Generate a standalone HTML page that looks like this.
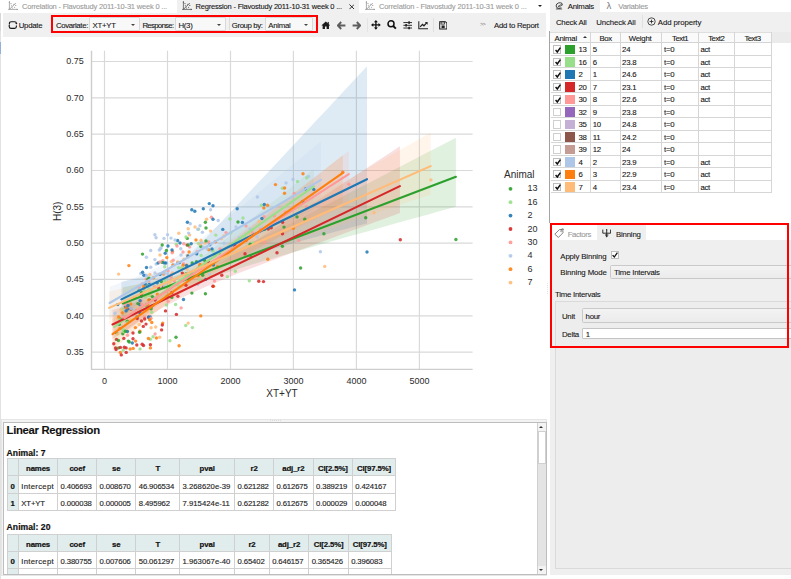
<!DOCTYPE html>
<html><head><meta charset="utf-8"><title>Regression</title>
<style>
*{box-sizing:border-box;margin:0;padding:0}
html,body{width:791px;height:579px;overflow:hidden;background:#fff}
body{position:relative;font-family:"Liberation Sans",sans-serif;font-size:7.8px;letter-spacing:-0.26px;color:#151515;-webkit-text-stroke:0.1px}
.a{position:absolute;white-space:nowrap}
.t{position:absolute;white-space:nowrap;line-height:11px}
.g{color:#9a9a9a}
svg text{font-family:"Liberation Sans",sans-serif;letter-spacing:0;fill:#2b2b2b}
.tk{font-size:9px}.al{font-size:10px}.lg{font-size:9px}
.combo{position:absolute;top:17.3px;height:13.3px;background:#f8f8f8;border:0.7px solid #d9d9d9;border-radius:1px}
.combo span{position:absolute;left:2.4px;top:1.7px;line-height:11px}
.combo i{position:absolute;right:3.6px;top:5.6px;width:0;height:0;border-left:2.3px solid transparent;border-right:2.3px solid transparent;border-top:2.6px solid #444}
.ic{position:absolute}
/* animals table */
.ar{position:absolute;left:550.5px;width:220.4px;height:12.49px;border-bottom:0.9px solid #d6d6d6}
.ar .c{position:absolute;top:1px;line-height:11px}
.cb{position:absolute;left:2.6px;top:2.1px;width:8.2px;height:8.2px;border:0.7px solid #cfcfcf;background:#fff}
.cb.on{border-color:#bdbdbd}
.ckm{position:absolute;left:-0.4px;top:-0.4px;width:8px;height:8px}
.sw{position:absolute;left:14.5px;top:1.5px;width:9.7px;height:9.7px}
.avl{position:absolute;top:31.7px;width:0.9px;height:161.6px;background:#d6d6d6}
/* regression tables */
.rt{position:absolute;background:#fff}
.rt .rh{position:absolute;left:0;top:0;width:100%;background:#e1ecec}
.rt .ri{position:absolute;left:0;top:0;background:#e1ecec}
.rt .vl{position:absolute;top:0;width:0.9px;background:#d0d0d0}
.rt .hl{position:absolute;left:0;width:100%;height:0.9px;background:#d0d0d0}
.rt .th{position:absolute;text-align:center;font-weight:bold;font-size:7.8px;letter-spacing:-0.12px;color:#111;-webkit-text-stroke:0.2px}
.rt .td{position:absolute;font-size:7.7px;letter-spacing:-0.12px;color:#262626;white-space:nowrap;-webkit-text-stroke:0.15px}
</style></head><body>

<!-- ===== top tab bar ===== -->
<div class="a" style="left:0;top:0;width:549px;height:12.5px;background:#fff"></div>
<div class="a" style="left:177px;top:0;width:182.4px;height:12.8px;background:#f0f0f0"></div>
<svg class="ic" style="left:8.2px;top:0.8px" width="10.4" height="9.8" viewBox="0 0 10.4 9.8"><path d="M1.4 0.6V8.4M0.2 8.4H9.6" fill="none" stroke="#909090" stroke-width="0.75"/><path d="M1.4 8.4L7.8 2" fill="none" stroke="#909090" stroke-width="0.8"/><path d="M1.4 0L0.6 1.4H2.2ZM10.2 8.4L8.8 7.6V9.2Z" fill="#909090"/><circle cx="3" cy="2.6" r="0.55" fill="#909090"/><circle cx="3.4" cy="4.8" r="0.55" fill="#909090"/><circle cx="5.8" cy="3.2" r="0.55" fill="#909090"/><circle cx="6.6" cy="6.2" r="0.55" fill="#909090"/><circle cx="7.8" cy="4.4" r="0.55" fill="#909090"/><circle cx="4.6" cy="7" r="0.5" fill="#909090"/></svg>
<span class="t g" style="left:22px;top:0.6px;font-size:7.5px;letter-spacing:-0.19px">Correlation - Flavostudy 2011-10-31 week 0 ...</span>
<svg class="ic" style="left:182.2px;top:0.8px" width="10.4" height="9.8" viewBox="0 0 10.4 9.8"><path d="M1.4 0.6V8.4M0.2 8.4H9.6" fill="none" stroke="#4a4a4a" stroke-width="0.75"/><path d="M1.4 8.4L7.8 2" fill="none" stroke="#4a4a4a" stroke-width="0.8"/><path d="M1.4 0L0.6 1.4H2.2ZM10.2 8.4L8.8 7.6V9.2Z" fill="#4a4a4a"/><circle cx="3" cy="2.6" r="0.55" fill="#4a4a4a"/><circle cx="3.4" cy="4.8" r="0.55" fill="#4a4a4a"/><circle cx="5.8" cy="3.2" r="0.55" fill="#4a4a4a"/><circle cx="6.6" cy="6.2" r="0.55" fill="#4a4a4a"/><circle cx="7.8" cy="4.4" r="0.55" fill="#4a4a4a"/><circle cx="4.6" cy="7" r="0.5" fill="#4a4a4a"/></svg>
<span class="t" style="left:195.5px;top:0.6px;font-size:7.5px;letter-spacing:-0.19px">Regression - Flavostudy 2011-10-31 week 0 ...</span>
<svg class="ic" style="left:348.9px;top:4px" width="5.6" height="5.6" viewBox="0 0 6 6"><path d="M0.5 0.5L5.5 5.5M5.5 0.5L0.5 5.5" stroke="#222" stroke-width="1"/></svg>
<svg class="ic" style="left:365.2px;top:0.8px" width="10.4" height="9.8" viewBox="0 0 10.4 9.8"><path d="M1.4 0.6V8.4M0.2 8.4H9.6" fill="none" stroke="#909090" stroke-width="0.75"/><path d="M1.4 8.4L7.8 2" fill="none" stroke="#909090" stroke-width="0.8"/><path d="M1.4 0L0.6 1.4H2.2ZM10.2 8.4L8.8 7.6V9.2Z" fill="#909090"/><circle cx="3" cy="2.6" r="0.55" fill="#909090"/><circle cx="3.4" cy="4.8" r="0.55" fill="#909090"/><circle cx="5.8" cy="3.2" r="0.55" fill="#909090"/><circle cx="6.6" cy="6.2" r="0.55" fill="#909090"/><circle cx="7.8" cy="4.4" r="0.55" fill="#909090"/><circle cx="4.6" cy="7" r="0.5" fill="#909090"/></svg>
<span class="t g" style="left:379px;top:0.6px;font-size:7.5px;letter-spacing:-0.13px">Correlation - Flavostudy 2011-10-31 week 0 ...</span>
<div class="a" style="left:538px;top:5.2px;width:0;height:0;border-left:2.4px solid transparent;border-right:2.4px solid transparent;border-top:2.8px solid #222"></div>

<!-- ===== toolbar ===== -->
<div class="a" style="left:3px;top:12.6px;width:543px;height:24.1px;background:#f0f0f0"></div>
<div class="a" style="left:0;top:12.5px;width:1.1px;height:566.5px;background:#e2e2e2"></div><div class="a" style="left:0;top:12.5px;width:1.1px;height:18.5px;background:#d6d6d6"></div><div class="a" style="left:0;top:42px;width:1.1px;height:12px;background:#8fb2d6"></div>
<svg class="ic" style="left:8px;top:20.8px" width="9.6" height="8.4" viewBox="0 0 9.6 8.4"><path d="M1.4 3.4V2.6Q1.4 0.8 3.2 0.8H6.6Q8.4 0.8 8.4 2.2M8.4 4.6V5.6Q8.4 7.4 6.6 7.4H3.2Q1.4 7.4 1.4 6" fill="none" stroke="#161616" stroke-width="1.15"/><path d="M0 5L1.9 3.7V6.3ZM7.2 2L8.4 3.6L9.6 2Z" fill="#161616"/></svg>
<span class="t" style="left:18.7px;top:20px">Update</span>
<div class="a" style="left:51px;top:14.8px;width:266.6px;height:18.2px;border:2.4px solid #ff0000;background:#f1f1f1"></div>
<span class="t" style="left:56px;top:20px;letter-spacing:-0.36px">Covariate:</span>
<div class="combo" style="left:89.2px;width:50.8px"><span>XT+YT</span><i></i></div>
<span class="t" style="left:142.4px;top:20px;letter-spacing:-0.7px">Response:</span>
<div class="combo" style="left:175px;width:51px"><span>H(3)</span><i></i></div>
<div class="a" style="left:228.8px;top:17.4px;width:0.7px;height:13px;background:#dcdcdc"></div>
<span class="t" style="left:231.8px;top:20px;letter-spacing:-0.4px">Group by:</span>
<div class="combo" style="left:264.8px;width:47.8px"><span>Animal</span><i></i></div>
<!-- icons -->
<svg class="ic" style="left:320.8px;top:21.2px" width="9.6" height="8.4" viewBox="0 0 10 9"><path d="M5 0.6L0.2 4.8H1.6V8.6H4.1V5.8H5.9V8.6H8.4V4.8H9.8Z" fill="#1c1c1c"/><rect x="7" y="1" width="1.2" height="2.2" fill="#1c1c1c"/></svg>
<svg class="ic" style="left:336.8px;top:20.8px" width="9" height="9" viewBox="0 0 9 9"><path d="M4.2 1L0.9 4.5L4.2 8M1.2 4.5H8.4" fill="none" stroke="#5e5e5e" stroke-width="1.9"/></svg>
<svg class="ic" style="left:352.2px;top:20.8px" width="9" height="9" viewBox="0 0 9 9"><path d="M4.8 1L8.1 4.5L4.8 8M7.8 4.5H0.6" fill="none" stroke="#5e5e5e" stroke-width="1.9"/></svg>
<div class="a" style="left:366.6px;top:18px;width:0.7px;height:14px;background:#e4e4e4"></div>
<svg class="ic" style="left:371.4px;top:20.4px" width="9.8" height="9.8" viewBox="0 0 11 11"><path d="M5.5 1.4V9.6M1.4 5.5H9.6" stroke="#111" stroke-width="1.5"/><path d="M5.5 0L7.7 2.6H3.3ZM5.5 11L7.7 8.4H3.3ZM0 5.5L2.6 3.3V7.7ZM11 5.5L8.4 3.3V7.7Z" fill="#111"/></svg>
<svg class="ic" style="left:387.4px;top:20px" width="10" height="10" viewBox="0 0 10 10"><circle cx="4" cy="3.8" r="3" fill="none" stroke="#111" stroke-width="1.5"/><path d="M6.2 6L8.9 8.7" stroke="#111" stroke-width="1.9"/></svg>
<svg class="ic" style="left:402.8px;top:21px" width="9.4" height="8.6" viewBox="0 0 10 9"><path d="M0.4 1.6H9.6M0.4 4.5H9.6M0.4 7.4H9.6" stroke="#222" stroke-width="1"/><rect x="5.6" y="0.3" width="1.8" height="2.6" fill="#222"/><rect x="2.4" y="3.2" width="1.8" height="2.6" fill="#222"/><rect x="5.6" y="6.1" width="1.8" height="2.6" fill="#222"/></svg>
<svg class="ic" style="left:417.6px;top:21px" width="10.6" height="8.6" viewBox="0 0 11 9"><path d="M0.8 0.2V8.2H10.8" fill="none" stroke="#222" stroke-width="1.1"/><path d="M2.2 6.2L4.6 3.6L6.2 5L9 2" fill="none" stroke="#222" stroke-width="1.3"/><path d="M7.2 1H10V3.8Z" fill="#222"/></svg>
<div class="a" style="left:433px;top:18px;width:0.7px;height:14px;background:#e0e0e0"></div>
<svg class="ic" style="left:438.6px;top:21px" width="8.6" height="8.6" viewBox="0 0 10 10"><path d="M0.8 0.8H7.4L9.2 2.6V9.2H0.8Z" fill="none" stroke="#222" stroke-width="1.2"/><rect x="2.4" y="1" width="4" height="2.6" fill="none" stroke="#222" stroke-width="0.9"/><rect x="3" y="5.2" width="3.6" height="3" fill="#222"/></svg>
<span class="t" style="left:480px;top:19.4px;color:#777;font-size:5.6px;letter-spacing:-0.7px;-webkit-text-stroke:0">&gt;&gt;</span>
<span class="t" style="left:494px;top:20px">Add to Report</span>

<!-- ===== plot ===== -->
<svg id="plot" width="549" height="385" viewBox="0 36 549 385" style="position:absolute;left:0;top:36px"><line x1="104.5" y1="50.7" x2="104.5" y2="369.4" stroke="#d9d9d9" stroke-width="1.15"/><line x1="167.5" y1="50.7" x2="167.5" y2="369.4" stroke="#d9d9d9" stroke-width="1.15"/><line x1="230.5" y1="50.7" x2="230.5" y2="369.4" stroke="#d9d9d9" stroke-width="1.15"/><line x1="293.4" y1="50.7" x2="293.4" y2="369.4" stroke="#d9d9d9" stroke-width="1.15"/><line x1="356.4" y1="50.7" x2="356.4" y2="369.4" stroke="#d9d9d9" stroke-width="1.15"/><line x1="419.4" y1="50.7" x2="419.4" y2="369.4" stroke="#d9d9d9" stroke-width="1.15"/><line x1="91.5" y1="352.1" x2="472.6" y2="352.1" stroke="#d9d9d9" stroke-width="1.15"/><line x1="91.5" y1="315.8" x2="472.6" y2="315.8" stroke="#d9d9d9" stroke-width="1.15"/><line x1="91.5" y1="279.4" x2="472.6" y2="279.4" stroke="#d9d9d9" stroke-width="1.15"/><line x1="91.5" y1="243.1" x2="472.6" y2="243.1" stroke="#d9d9d9" stroke-width="1.15"/><line x1="91.5" y1="206.8" x2="472.6" y2="206.8" stroke="#d9d9d9" stroke-width="1.15"/><line x1="91.5" y1="170.5" x2="472.6" y2="170.5" stroke="#d9d9d9" stroke-width="1.15"/><line x1="91.5" y1="134.1" x2="472.6" y2="134.1" stroke="#d9d9d9" stroke-width="1.15"/><line x1="91.5" y1="97.8" x2="472.6" y2="97.8" stroke="#d9d9d9" stroke-width="1.15"/><line x1="91.5" y1="61.5" x2="472.6" y2="61.5" stroke="#d9d9d9" stroke-width="1.15"/><polygon fill="#2ca02c" fill-opacity="0.15" points="122.8,287.2 136.6,284.7 150.5,282.0 164.4,278.8 178.3,274.9 192.2,269.8 206.1,264.0 219.9,257.8 233.8,251.3 247.7,244.6 261.6,237.8 275.5,230.8 289.3,223.8 303.2,216.7 317.1,209.6 331.0,202.4 344.9,195.3 358.8,188.1 372.6,180.9 386.5,173.7 400.4,166.5 414.3,159.3 428.2,152.1 442.0,144.9 455.9,137.7 455.9,206.8 442.0,210.6 428.2,214.5 414.3,218.3 400.4,222.1 386.5,226.0 372.6,229.9 358.8,233.7 344.9,237.6 331.0,241.5 317.1,245.5 303.2,249.4 289.3,253.4 275.5,257.5 261.6,261.6 247.7,265.8 233.8,270.2 219.9,274.7 206.1,279.4 192.2,284.4 178.3,289.9 164.4,296.5 150.5,303.9 136.6,311.7 122.8,319.7"/><polygon fill="#98df8a" fill-opacity="0.15" points="114.1,312.0 122.4,307.7 130.7,303.3 139.0,298.9 147.4,294.3 155.7,289.4 164.0,284.3 172.3,278.7 180.7,272.8 189.0,266.8 197.3,260.7 205.6,254.4 214.0,248.1 222.3,241.7 230.6,235.2 238.9,228.7 247.3,222.2 255.6,215.6 263.9,209.0 272.2,202.3 280.6,195.7 288.9,189.0 297.2,182.3 305.5,175.6 313.8,168.9 313.8,209.4 305.5,214.0 297.2,218.7 288.9,223.3 280.6,228.0 272.2,232.7 263.9,237.4 255.6,242.1 247.3,246.8 238.9,251.6 230.6,256.4 222.3,261.3 214.0,266.3 205.6,271.3 197.3,276.5 189.0,281.9 180.7,287.5 172.3,293.2 164.0,299.4 155.7,306.0 147.4,312.8 139.0,319.9 130.7,327.2 122.4,334.5 114.1,341.9"/><polygon fill="#1f77b4" fill-opacity="0.15" points="121.4,281.9 131.6,279.6 141.8,277.2 152.1,274.6 162.3,271.3 172.5,267.1 182.8,260.4 193.0,251.0 203.3,240.7 213.5,230.1 223.7,219.3 234.0,208.5 244.2,197.6 254.4,186.7 264.7,175.8 274.9,164.9 285.1,153.9 295.4,143.0 305.6,132.1 315.8,121.1 326.1,110.2 336.3,99.2 346.5,88.2 356.8,77.3 367.0,66.3 367.0,223.4 356.8,226.1 346.5,228.8 336.3,231.6 326.1,234.3 315.8,237.1 305.6,239.8 295.4,242.6 285.1,245.4 274.9,248.2 264.7,251.0 254.4,253.9 244.2,256.8 234.0,259.7 223.7,262.7 213.5,265.9 203.3,269.2 193.0,272.8 182.8,276.9 172.5,281.6 162.3,287.4 152.1,294.2 141.8,301.6 131.6,309.2 121.4,317.0"/><polygon fill="#d62728" fill-opacity="0.15" points="112.5,309.9 124.5,306.1 136.4,302.3 148.4,298.2 160.4,293.9 172.4,288.9 184.3,283.3 196.3,277.0 208.3,270.1 220.3,262.9 232.2,255.4 244.2,247.9 256.2,240.2 268.2,232.5 280.1,224.7 292.1,216.9 304.1,209.1 316.1,201.3 328.0,193.5 340.0,185.6 352.0,177.8 364.0,169.9 375.9,162.0 387.9,154.2 399.9,146.3 399.9,213.0 387.9,217.4 375.9,221.8 364.0,226.2 352.0,230.6 340.0,235.0 328.0,239.5 316.1,243.9 304.1,248.4 292.1,252.8 280.1,257.3 268.2,261.9 256.2,266.5 244.2,271.1 232.2,275.8 220.3,280.7 208.3,285.7 196.3,290.9 184.3,296.4 172.4,302.4 160.4,309.0 148.4,316.1 136.4,323.6 124.5,331.3 112.5,339.1"/><polygon fill="#ff9896" fill-opacity="0.15" points="124.4,302.0 133.8,298.4 143.1,294.6 152.5,290.6 161.8,286.1 171.2,280.9 180.5,274.9 189.9,268.7 199.2,262.3 208.6,255.7 217.9,249.1 227.3,242.3 236.6,235.5 246.0,228.6 255.3,221.7 264.7,214.7 274.0,207.7 283.4,200.7 292.7,193.6 302.0,186.6 311.4,179.5 320.7,172.4 330.1,165.3 339.4,158.2 348.8,151.1 348.8,204.0 339.4,208.5 330.1,213.1 320.7,217.6 311.4,222.1 302.0,226.6 292.7,231.2 283.4,235.7 274.0,240.3 264.7,244.9 255.3,249.5 246.0,254.2 236.6,258.9 227.3,263.6 217.9,268.5 208.6,273.5 199.2,278.6 189.9,283.9 180.5,289.6 171.2,295.5 161.8,302.3 152.5,309.8 143.1,317.8 133.8,326.1 124.4,334.5"/><polygon fill="#aec7e8" fill-opacity="0.15" points="109.6,286.7 118.4,283.6 127.2,280.3 136.0,276.9 144.8,273.2 153.6,269.3 162.5,264.8 171.3,259.8 180.1,254.1 188.9,247.9 197.7,241.3 206.5,234.5 215.3,227.6 224.1,220.6 232.9,213.5 241.7,206.4 250.6,199.2 259.4,192.0 268.2,184.8 277.0,177.6 285.8,170.4 294.6,163.2 303.4,155.9 312.2,148.7 321.0,141.4 321.0,209.9 312.2,213.4 303.4,216.9 294.6,220.4 285.8,224.0 277.0,227.5 268.2,231.1 259.4,234.6 250.6,238.2 241.7,241.9 232.9,245.5 224.1,249.3 215.3,253.0 206.5,256.9 197.7,260.9 188.9,265.1 180.1,269.6 171.3,274.4 162.5,279.6 153.6,285.4 144.8,291.7 136.0,298.3 127.2,305.2 118.4,312.2 109.6,319.2"/><polygon fill="#ff7f0e" fill-opacity="0.15" points="112.5,318.0 122.1,313.3 131.7,308.4 141.3,303.5 150.9,298.3 160.5,292.7 170.1,286.6 179.7,279.9 189.3,273.0 198.9,266.1 208.5,259.0 218.1,251.9 227.7,244.7 237.3,237.4 246.9,230.1 256.4,222.7 266.0,215.3 275.6,207.9 285.2,200.4 294.8,192.9 304.4,185.4 314.0,177.9 323.6,170.4 333.2,162.8 342.8,155.3 342.8,202.8 333.2,207.9 323.6,213.1 314.0,218.2 304.4,223.4 294.8,228.5 285.2,233.7 275.6,238.9 266.0,244.1 256.4,249.3 246.9,254.6 237.3,259.9 227.7,265.3 218.1,270.8 208.5,276.4 198.9,282.2 189.3,288.2 179.7,294.5 170.1,301.2 160.5,308.5 150.9,316.4 141.3,324.6 131.7,333.1 122.1,341.7 112.5,350.5"/><polygon fill="#ffbb78" fill-opacity="0.15" points="109.1,291.7 122.5,288.2 135.9,284.5 149.3,280.6 162.7,276.2 176.1,271.1 189.5,265.1 202.9,258.7 216.3,252.0 229.7,245.0 243.1,237.9 256.5,230.6 269.9,223.2 283.3,215.8 296.7,208.3 310.1,200.8 323.5,193.3 336.9,185.7 350.3,178.2 363.7,170.6 377.1,163.0 390.5,155.4 403.9,147.8 417.3,140.2 430.7,132.6 430.7,194.6 417.3,199.1 403.9,203.6 390.5,208.1 377.1,212.6 363.7,217.1 350.3,221.7 336.9,226.2 323.5,230.8 310.1,235.3 296.7,239.9 283.3,244.6 269.9,249.3 256.5,254.0 243.1,258.9 229.7,263.8 216.3,268.9 202.9,274.2 189.5,279.8 176.1,285.7 162.7,292.4 149.3,299.8 135.9,307.7 122.5,315.9 109.1,324.2"/><circle cx="176.0" cy="337.3" r="1.7" fill="#2ca02c" fill-opacity="0.85"/><circle cx="141.5" cy="321.0" r="1.7" fill="#d62728" fill-opacity="0.85"/><circle cx="252.6" cy="232.8" r="1.7" fill="#ff9896" fill-opacity="0.85"/><circle cx="187.3" cy="255.5" r="1.7" fill="#ffbb78" fill-opacity="0.85"/><circle cx="158.7" cy="288.1" r="1.7" fill="#d62728" fill-opacity="0.85"/><circle cx="156.4" cy="338.0" r="1.7" fill="#ff7f0e" fill-opacity="0.85"/><circle cx="153.5" cy="277.7" r="1.7" fill="#ff7f0e" fill-opacity="0.85"/><circle cx="284.0" cy="227.1" r="1.7" fill="#2ca02c" fill-opacity="0.85"/><circle cx="155.0" cy="272.9" r="1.7" fill="#aec7e8" fill-opacity="0.85"/><circle cx="171.2" cy="277.6" r="1.7" fill="#ff9896" fill-opacity="0.85"/><circle cx="282.6" cy="222.2" r="1.7" fill="#d62728" fill-opacity="0.85"/><circle cx="198.5" cy="243.5" r="1.7" fill="#98df8a" fill-opacity="0.85"/><circle cx="188.1" cy="278.7" r="1.7" fill="#d62728" fill-opacity="0.85"/><circle cx="144.4" cy="317.1" r="1.7" fill="#ff9896" fill-opacity="0.85"/><circle cx="264.7" cy="229.2" r="1.7" fill="#2ca02c" fill-opacity="0.85"/><circle cx="263.5" cy="281.6" r="1.7" fill="#d62728" fill-opacity="0.85"/><circle cx="268.3" cy="229.1" r="1.7" fill="#d62728" fill-opacity="0.85"/><circle cx="187.1" cy="269.3" r="1.7" fill="#ffbb78" fill-opacity="0.85"/><circle cx="188.3" cy="275.9" r="1.7" fill="#2ca02c" fill-opacity="0.85"/><circle cx="131.0" cy="309.0" r="1.7" fill="#d62728" fill-opacity="0.85"/><circle cx="125.0" cy="326.0" r="1.7" fill="#ffbb78" fill-opacity="0.85"/><circle cx="183.8" cy="243.7" r="1.7" fill="#ff9896" fill-opacity="0.85"/><circle cx="162.8" cy="260.6" r="1.7" fill="#ff9896" fill-opacity="0.85"/><circle cx="143.4" cy="292.5" r="1.7" fill="#ffbb78" fill-opacity="0.85"/><circle cx="141.1" cy="296.4" r="1.7" fill="#1f77b4" fill-opacity="0.85"/><circle cx="250.3" cy="234.4" r="1.7" fill="#ffbb78" fill-opacity="0.85"/><circle cx="133.0" cy="333.0" r="1.7" fill="#d62728" fill-opacity="0.85"/><circle cx="197.7" cy="284.2" r="1.7" fill="#aec7e8" fill-opacity="0.85"/><circle cx="176.4" cy="314.4" r="1.7" fill="#d62728" fill-opacity="0.85"/><circle cx="130.1" cy="319.5" r="1.7" fill="#ffbb78" fill-opacity="0.85"/><circle cx="151.1" cy="327.8" r="1.7" fill="#ffbb78" fill-opacity="0.85"/><circle cx="165.2" cy="253.3" r="1.7" fill="#1f77b4" fill-opacity="0.85"/><circle cx="230.9" cy="232.8" r="1.7" fill="#98df8a" fill-opacity="0.85"/><circle cx="282.5" cy="233.7" r="1.7" fill="#d62728" fill-opacity="0.85"/><circle cx="157.2" cy="282.8" r="1.7" fill="#1f77b4" fill-opacity="0.85"/><circle cx="131.2" cy="308.6" r="1.7" fill="#aec7e8" fill-opacity="0.85"/><circle cx="183.5" cy="299.5" r="1.7" fill="#1f77b4" fill-opacity="0.85"/><circle cx="132.3" cy="343.0" r="1.7" fill="#1f77b4" fill-opacity="0.85"/><circle cx="139.9" cy="331.2" r="1.7" fill="#ff7f0e" fill-opacity="0.85"/><circle cx="123.2" cy="350.2" r="1.7" fill="#98df8a" fill-opacity="0.85"/><circle cx="141.2" cy="300.9" r="1.7" fill="#ff9896" fill-opacity="0.85"/><circle cx="135.5" cy="312.0" r="1.7" fill="#ff7f0e" fill-opacity="0.85"/><circle cx="213.5" cy="286.3" r="1.7" fill="#ff7f0e" fill-opacity="0.85"/><circle cx="209.8" cy="244.7" r="1.7" fill="#1f77b4" fill-opacity="0.85"/><circle cx="140.0" cy="348.9" r="1.7" fill="#98df8a" fill-opacity="0.85"/><circle cx="116.5" cy="332.8" r="1.7" fill="#2ca02c" fill-opacity="0.85"/><circle cx="227.4" cy="276.7" r="1.7" fill="#98df8a" fill-opacity="0.85"/><circle cx="150.4" cy="344.8" r="1.7" fill="#d62728" fill-opacity="0.85"/><circle cx="168.0" cy="270.8" r="1.7" fill="#ff9896" fill-opacity="0.85"/><circle cx="205.4" cy="222.3" r="1.7" fill="#2ca02c" fill-opacity="0.85"/><circle cx="285.3" cy="212.1" r="1.7" fill="#ff9896" fill-opacity="0.85"/><circle cx="400.3" cy="239.8" r="1.7" fill="#d62728" fill-opacity="0.85"/><circle cx="304.8" cy="219.2" r="1.7" fill="#2ca02c" fill-opacity="0.85"/><circle cx="148.7" cy="317.2" r="1.7" fill="#d62728" fill-opacity="0.85"/><circle cx="235.3" cy="271.2" r="1.7" fill="#98df8a" fill-opacity="0.85"/><circle cx="162.2" cy="262.4" r="1.7" fill="#2ca02c" fill-opacity="0.85"/><circle cx="208.7" cy="242.0" r="1.7" fill="#ff9896" fill-opacity="0.85"/><circle cx="284.5" cy="193.3" r="1.7" fill="#ff7f0e" fill-opacity="0.85"/><circle cx="189.6" cy="246.9" r="1.7" fill="#ff9896" fill-opacity="0.85"/><circle cx="169.9" cy="340.7" r="1.7" fill="#98df8a" fill-opacity="0.85"/><circle cx="127.3" cy="321.2" r="1.7" fill="#2ca02c" fill-opacity="0.85"/><circle cx="374.0" cy="212.8" r="1.7" fill="#ffbb78" fill-opacity="0.85"/><circle cx="294.2" cy="193.4" r="1.7" fill="#ff9896" fill-opacity="0.85"/><circle cx="139.9" cy="313.1" r="1.7" fill="#1f77b4" fill-opacity="0.85"/><circle cx="190.3" cy="223.7" r="1.7" fill="#aec7e8" fill-opacity="0.85"/><circle cx="147.8" cy="286.0" r="1.7" fill="#2ca02c" fill-opacity="0.85"/><circle cx="252.6" cy="242.9" r="1.7" fill="#98df8a" fill-opacity="0.85"/><circle cx="342.8" cy="172.3" r="1.7" fill="#ff7f0e" fill-opacity="0.85"/><circle cx="205.1" cy="243.1" r="1.7" fill="#ffbb78" fill-opacity="0.85"/><circle cx="215.2" cy="254.7" r="1.7" fill="#d62728" fill-opacity="0.85"/><circle cx="140.1" cy="300.7" r="1.7" fill="#1f77b4" fill-opacity="0.85"/><circle cx="300.6" cy="268.0" r="1.7" fill="#2ca02c" fill-opacity="0.85"/><circle cx="198.5" cy="229.2" r="1.7" fill="#98df8a" fill-opacity="0.85"/><circle cx="200.9" cy="246.5" r="1.7" fill="#2ca02c" fill-opacity="0.85"/><circle cx="135.9" cy="297.4" r="1.7" fill="#98df8a" fill-opacity="0.85"/><circle cx="211.2" cy="250.2" r="1.7" fill="#aec7e8" fill-opacity="0.85"/><circle cx="365.7" cy="217.7" r="1.7" fill="#2ca02c" fill-opacity="0.85"/><circle cx="226.0" cy="232.6" r="1.7" fill="#ff9896" fill-opacity="0.85"/><circle cx="171.8" cy="297.4" r="1.7" fill="#2ca02c" fill-opacity="0.85"/><circle cx="217.5" cy="266.8" r="1.7" fill="#ff7f0e" fill-opacity="0.85"/><circle cx="183.5" cy="263.6" r="1.7" fill="#ff9896" fill-opacity="0.85"/><circle cx="142.2" cy="284.0" r="1.7" fill="#ff9896" fill-opacity="0.85"/><circle cx="127.5" cy="335.2" r="1.7" fill="#ff9896" fill-opacity="0.85"/><circle cx="122.8" cy="333.7" r="1.7" fill="#2ca02c" fill-opacity="0.85"/><circle cx="267.5" cy="205.3" r="1.7" fill="#ff7f0e" fill-opacity="0.85"/><circle cx="196.0" cy="275.1" r="1.7" fill="#ffbb78" fill-opacity="0.85"/><circle cx="149.7" cy="301.6" r="1.7" fill="#ff9896" fill-opacity="0.85"/><circle cx="250.2" cy="244.2" r="1.7" fill="#2ca02c" fill-opacity="0.85"/><circle cx="150.4" cy="295.4" r="1.7" fill="#ffbb78" fill-opacity="0.85"/><circle cx="153.1" cy="336.7" r="1.7" fill="#98df8a" fill-opacity="0.85"/><circle cx="141.5" cy="293.2" r="1.7" fill="#2ca02c" fill-opacity="0.85"/><circle cx="195.4" cy="276.5" r="1.7" fill="#ffbb78" fill-opacity="0.85"/><circle cx="179.4" cy="262.6" r="1.7" fill="#1f77b4" fill-opacity="0.85"/><circle cx="128.3" cy="341.1" r="1.7" fill="#2ca02c" fill-opacity="0.85"/><circle cx="140.8" cy="273.4" r="1.7" fill="#aec7e8" fill-opacity="0.85"/><circle cx="183.9" cy="259.2" r="1.7" fill="#ffbb78" fill-opacity="0.85"/><circle cx="156.1" cy="264.0" r="1.7" fill="#aec7e8" fill-opacity="0.85"/><circle cx="186.1" cy="274.0" r="1.7" fill="#2ca02c" fill-opacity="0.85"/><circle cx="206.0" cy="228.0" r="1.7" fill="#2ca02c" fill-opacity="0.85"/><circle cx="177.7" cy="262.8" r="1.7" fill="#1f77b4" fill-opacity="0.85"/><circle cx="151.6" cy="306.2" r="1.7" fill="#1f77b4" fill-opacity="0.85"/><circle cx="235.0" cy="245.1" r="1.7" fill="#d62728" fill-opacity="0.85"/><circle cx="118.5" cy="347.9" r="1.7" fill="#2ca02c" fill-opacity="0.85"/><circle cx="181.1" cy="307.9" r="1.7" fill="#ff9896" fill-opacity="0.85"/><circle cx="186.0" cy="285.3" r="1.7" fill="#d62728" fill-opacity="0.85"/><circle cx="116.5" cy="339.4" r="1.7" fill="#d62728" fill-opacity="0.85"/><circle cx="119.3" cy="324.4" r="1.7" fill="#2ca02c" fill-opacity="0.85"/><circle cx="199.7" cy="280.0" r="1.7" fill="#98df8a" fill-opacity="0.85"/><circle cx="146.1" cy="279.1" r="1.7" fill="#ff9896" fill-opacity="0.85"/><circle cx="203.2" cy="247.4" r="1.7" fill="#aec7e8" fill-opacity="0.85"/><circle cx="137.2" cy="317.0" r="1.7" fill="#1f77b4" fill-opacity="0.85"/><circle cx="187.4" cy="222.3" r="1.7" fill="#1f77b4" fill-opacity="0.85"/><circle cx="232.7" cy="247.5" r="1.7" fill="#1f77b4" fill-opacity="0.85"/><circle cx="158.1" cy="263.0" r="1.7" fill="#1f77b4" fill-opacity="0.85"/><circle cx="150.4" cy="339.3" r="1.7" fill="#98df8a" fill-opacity="0.85"/><circle cx="148.0" cy="279.3" r="1.7" fill="#2ca02c" fill-opacity="0.85"/><circle cx="191.9" cy="293.1" r="1.7" fill="#2ca02c" fill-opacity="0.85"/><circle cx="171.5" cy="261.5" r="1.7" fill="#ffbb78" fill-opacity="0.85"/><circle cx="204.5" cy="260.2" r="1.7" fill="#2ca02c" fill-opacity="0.85"/><circle cx="305.5" cy="189.0" r="1.7" fill="#1f77b4" fill-opacity="0.85"/><circle cx="121.7" cy="309.2" r="1.7" fill="#98df8a" fill-opacity="0.85"/><circle cx="133.2" cy="348.4" r="1.7" fill="#ff7f0e" fill-opacity="0.85"/><circle cx="149.2" cy="295.5" r="1.7" fill="#98df8a" fill-opacity="0.85"/><circle cx="124.3" cy="319.4" r="1.7" fill="#ffbb78" fill-opacity="0.85"/><circle cx="248.3" cy="237.5" r="1.7" fill="#ffbb78" fill-opacity="0.85"/><circle cx="150.2" cy="316.9" r="1.7" fill="#1f77b4" fill-opacity="0.85"/><circle cx="143.8" cy="286.0" r="1.7" fill="#ff7f0e" fill-opacity="0.85"/><circle cx="122.2" cy="312.7" r="1.7" fill="#ff7f0e" fill-opacity="0.85"/><circle cx="297.0" cy="216.9" r="1.7" fill="#2ca02c" fill-opacity="0.85"/><circle cx="149.0" cy="278.1" r="1.7" fill="#2ca02c" fill-opacity="0.85"/><circle cx="209.5" cy="274.5" r="1.7" fill="#aec7e8" fill-opacity="0.85"/><circle cx="125.8" cy="308.6" r="1.7" fill="#aec7e8" fill-opacity="0.85"/><circle cx="218.2" cy="220.5" r="1.7" fill="#aec7e8" fill-opacity="0.85"/><circle cx="173.3" cy="264.4" r="1.7" fill="#aec7e8" fill-opacity="0.85"/><circle cx="166.8" cy="257.6" r="1.7" fill="#ff7f0e" fill-opacity="0.85"/><circle cx="148.7" cy="281.1" r="1.7" fill="#ff9896" fill-opacity="0.85"/><circle cx="180.8" cy="248.7" r="1.7" fill="#aec7e8" fill-opacity="0.85"/><circle cx="124.0" cy="331.6" r="1.7" fill="#98df8a" fill-opacity="0.85"/><circle cx="130.2" cy="349.0" r="1.7" fill="#ff7f0e" fill-opacity="0.85"/><circle cx="149.6" cy="319.8" r="1.7" fill="#98df8a" fill-opacity="0.85"/><circle cx="151.2" cy="290.4" r="1.7" fill="#98df8a" fill-opacity="0.85"/><circle cx="143.5" cy="345.5" r="1.7" fill="#d62728" fill-opacity="0.85"/><circle cx="224.1" cy="243.3" r="1.7" fill="#aec7e8" fill-opacity="0.85"/><circle cx="202.7" cy="275.3" r="1.7" fill="#2ca02c" fill-opacity="0.85"/><circle cx="239.4" cy="237.7" r="1.7" fill="#aec7e8" fill-opacity="0.85"/><circle cx="324.7" cy="266.4" r="1.7" fill="#ffbb78" fill-opacity="0.85"/><circle cx="149.4" cy="318.2" r="1.7" fill="#ff9896" fill-opacity="0.85"/><circle cx="302.8" cy="201.5" r="1.7" fill="#1f77b4" fill-opacity="0.85"/><circle cx="127.4" cy="322.5" r="1.7" fill="#98df8a" fill-opacity="0.85"/><circle cx="165.5" cy="310.9" r="1.7" fill="#d62728" fill-opacity="0.85"/><circle cx="161.3" cy="281.5" r="1.7" fill="#2ca02c" fill-opacity="0.85"/><circle cx="176.3" cy="244.2" r="1.7" fill="#98df8a" fill-opacity="0.85"/><circle cx="154.6" cy="286.6" r="1.7" fill="#ff9896" fill-opacity="0.85"/><circle cx="163.5" cy="287.3" r="1.7" fill="#d62728" fill-opacity="0.85"/><circle cx="210.6" cy="209.8" r="1.7" fill="#aec7e8" fill-opacity="0.85"/><circle cx="213.1" cy="250.9" r="1.7" fill="#98df8a" fill-opacity="0.85"/><circle cx="169.9" cy="283.4" r="1.7" fill="#ffbb78" fill-opacity="0.85"/><circle cx="137.2" cy="318.6" r="1.7" fill="#d62728" fill-opacity="0.85"/><circle cx="183.2" cy="265.2" r="1.7" fill="#ff7f0e" fill-opacity="0.85"/><circle cx="205.2" cy="263.7" r="1.7" fill="#ff7f0e" fill-opacity="0.85"/><circle cx="118.5" cy="329.3" r="1.7" fill="#ffbb78" fill-opacity="0.85"/><circle cx="117.6" cy="334.0" r="1.7" fill="#ffbb78" fill-opacity="0.85"/><circle cx="139.2" cy="290.3" r="1.7" fill="#2ca02c" fill-opacity="0.85"/><circle cx="172.6" cy="251.8" r="1.7" fill="#ff7f0e" fill-opacity="0.85"/><circle cx="181.9" cy="267.6" r="1.7" fill="#ffbb78" fill-opacity="0.85"/><circle cx="161.0" cy="248.0" r="1.7" fill="#aec7e8" fill-opacity="0.85"/><circle cx="245.0" cy="253.8" r="1.7" fill="#d62728" fill-opacity="0.85"/><circle cx="172.2" cy="252.7" r="1.7" fill="#ff9896" fill-opacity="0.85"/><circle cx="155.7" cy="327.0" r="1.7" fill="#ffbb78" fill-opacity="0.85"/><circle cx="174.3" cy="281.1" r="1.7" fill="#ff9896" fill-opacity="0.85"/><circle cx="189.3" cy="273.6" r="1.7" fill="#98df8a" fill-opacity="0.85"/><circle cx="139.3" cy="287.5" r="1.7" fill="#ff9896" fill-opacity="0.85"/><circle cx="306.7" cy="177.7" r="1.7" fill="#98df8a" fill-opacity="0.85"/><circle cx="158.4" cy="274.5" r="1.7" fill="#ffbb78" fill-opacity="0.85"/><circle cx="135.4" cy="327.6" r="1.7" fill="#ff7f0e" fill-opacity="0.85"/><circle cx="126.1" cy="347.9" r="1.7" fill="#d62728" fill-opacity="0.85"/><circle cx="148.4" cy="338.5" r="1.7" fill="#ff7f0e" fill-opacity="0.85"/><circle cx="120.3" cy="318.9" r="1.7" fill="#2ca02c" fill-opacity="0.85"/><circle cx="231.8" cy="246.9" r="1.7" fill="#ffbb78" fill-opacity="0.85"/><circle cx="139.8" cy="304.5" r="1.7" fill="#1f77b4" fill-opacity="0.85"/><circle cx="160.0" cy="274.4" r="1.7" fill="#1f77b4" fill-opacity="0.85"/><circle cx="245.8" cy="239.5" r="1.7" fill="#ffbb78" fill-opacity="0.85"/><circle cx="175.6" cy="304.5" r="1.7" fill="#98df8a" fill-opacity="0.85"/><circle cx="199.6" cy="266.3" r="1.7" fill="#ff7f0e" fill-opacity="0.85"/><circle cx="274.3" cy="215.7" r="1.7" fill="#ff9896" fill-opacity="0.85"/><circle cx="221.8" cy="275.3" r="1.7" fill="#d62728" fill-opacity="0.85"/><circle cx="258.8" cy="281.2" r="1.7" fill="#d62728" fill-opacity="0.85"/><circle cx="208.7" cy="249.8" r="1.7" fill="#ff7f0e" fill-opacity="0.85"/><circle cx="242.4" cy="222.4" r="1.7" fill="#1f77b4" fill-opacity="0.85"/><circle cx="177.9" cy="296.3" r="1.7" fill="#d62728" fill-opacity="0.85"/><circle cx="145.7" cy="275.3" r="1.7" fill="#aec7e8" fill-opacity="0.85"/><circle cx="171.3" cy="274.9" r="1.7" fill="#ff9896" fill-opacity="0.85"/><circle cx="313.8" cy="189.4" r="1.7" fill="#1f77b4" fill-opacity="0.85"/><circle cx="125.5" cy="306.8" r="1.7" fill="#1f77b4" fill-opacity="0.85"/><circle cx="162.7" cy="323.1" r="1.7" fill="#ff7f0e" fill-opacity="0.85"/><circle cx="141.7" cy="292.8" r="1.7" fill="#2ca02c" fill-opacity="0.85"/><circle cx="308.5" cy="176.4" r="1.7" fill="#aec7e8" fill-opacity="0.85"/><circle cx="207.1" cy="248.7" r="1.7" fill="#aec7e8" fill-opacity="0.85"/><circle cx="210.8" cy="276.4" r="1.7" fill="#ffbb78" fill-opacity="0.85"/><circle cx="188.2" cy="323.1" r="1.7" fill="#ffbb78" fill-opacity="0.85"/><circle cx="141.7" cy="304.2" r="1.7" fill="#ff9896" fill-opacity="0.85"/><circle cx="128.3" cy="316.8" r="1.7" fill="#aec7e8" fill-opacity="0.85"/><circle cx="157.4" cy="294.3" r="1.7" fill="#ff7f0e" fill-opacity="0.85"/><circle cx="149.5" cy="300.1" r="1.7" fill="#2ca02c" fill-opacity="0.85"/><circle cx="187.3" cy="265.0" r="1.7" fill="#ffbb78" fill-opacity="0.85"/><circle cx="246.1" cy="240.2" r="1.7" fill="#d62728" fill-opacity="0.85"/><circle cx="151.7" cy="312.2" r="1.7" fill="#98df8a" fill-opacity="0.85"/><circle cx="181.9" cy="267.9" r="1.7" fill="#98df8a" fill-opacity="0.85"/><circle cx="198.0" cy="268.8" r="1.7" fill="#ff7f0e" fill-opacity="0.85"/><circle cx="213.4" cy="265.1" r="1.7" fill="#1f77b4" fill-opacity="0.85"/><circle cx="137.9" cy="303.6" r="1.7" fill="#2ca02c" fill-opacity="0.85"/><circle cx="264.1" cy="216.8" r="1.7" fill="#ff9896" fill-opacity="0.85"/><circle cx="259.0" cy="221.5" r="1.7" fill="#ffbb78" fill-opacity="0.85"/><circle cx="133.0" cy="338.8" r="1.7" fill="#d62728" fill-opacity="0.85"/><circle cx="150.4" cy="284.2" r="1.7" fill="#aec7e8" fill-opacity="0.85"/><circle cx="143.3" cy="326.4" r="1.7" fill="#d62728" fill-opacity="0.85"/><circle cx="197.2" cy="251.7" r="1.7" fill="#ff9896" fill-opacity="0.85"/><circle cx="348.9" cy="184.3" r="1.7" fill="#ff9896" fill-opacity="0.85"/><circle cx="177.8" cy="261.9" r="1.7" fill="#ffbb78" fill-opacity="0.85"/><circle cx="132.0" cy="298.7" r="1.7" fill="#aec7e8" fill-opacity="0.85"/><circle cx="248.5" cy="257.6" r="1.7" fill="#ff9896" fill-opacity="0.85"/><circle cx="123.8" cy="338.4" r="1.7" fill="#d62728" fill-opacity="0.85"/><circle cx="148.8" cy="289.7" r="1.7" fill="#98df8a" fill-opacity="0.85"/><circle cx="135.6" cy="341.1" r="1.7" fill="#ff7f0e" fill-opacity="0.85"/><circle cx="222.8" cy="229.4" r="1.7" fill="#1f77b4" fill-opacity="0.85"/><circle cx="120.3" cy="352.4" r="1.7" fill="#ff7f0e" fill-opacity="0.85"/><circle cx="148.7" cy="306.8" r="1.7" fill="#ff9896" fill-opacity="0.85"/><circle cx="182.3" cy="273.1" r="1.7" fill="#d62728" fill-opacity="0.85"/><circle cx="212.9" cy="286.2" r="1.7" fill="#d62728" fill-opacity="0.85"/><circle cx="120.4" cy="347.4" r="1.7" fill="#d62728" fill-opacity="0.85"/><circle cx="121.0" cy="310.0" r="1.7" fill="#ffbb78" fill-opacity="0.85"/><circle cx="167.7" cy="273.8" r="1.7" fill="#aec7e8" fill-opacity="0.85"/><circle cx="160.2" cy="249.0" r="1.7" fill="#aec7e8" fill-opacity="0.85"/><circle cx="164.7" cy="266.7" r="1.7" fill="#98df8a" fill-opacity="0.85"/><circle cx="173.2" cy="260.3" r="1.7" fill="#ff9896" fill-opacity="0.85"/><circle cx="167.2" cy="296.5" r="1.7" fill="#2ca02c" fill-opacity="0.85"/><circle cx="145.6" cy="296.3" r="1.7" fill="#ffbb78" fill-opacity="0.85"/><circle cx="220.0" cy="249.0" r="1.7" fill="#ff9896" fill-opacity="0.85"/><circle cx="124.8" cy="318.3" r="1.7" fill="#aec7e8" fill-opacity="0.85"/><circle cx="145.5" cy="296.7" r="1.7" fill="#98df8a" fill-opacity="0.85"/><circle cx="251.1" cy="256.6" r="1.7" fill="#2ca02c" fill-opacity="0.85"/><circle cx="212.9" cy="262.9" r="1.7" fill="#2ca02c" fill-opacity="0.85"/><circle cx="140.1" cy="289.6" r="1.7" fill="#aec7e8" fill-opacity="0.85"/><circle cx="367.0" cy="252.0" r="1.7" fill="#1f77b4" fill-opacity="0.85"/><circle cx="141.6" cy="295.8" r="1.7" fill="#d62728" fill-opacity="0.85"/><circle cx="127.5" cy="309.0" r="1.7" fill="#1f77b4" fill-opacity="0.85"/><circle cx="141.6" cy="314.4" r="1.7" fill="#ffbb78" fill-opacity="0.85"/><circle cx="159.7" cy="337.3" r="1.7" fill="#ffbb78" fill-opacity="0.85"/><circle cx="117.7" cy="304.6" r="1.7" fill="#1f77b4" fill-opacity="0.85"/><circle cx="117.9" cy="318.8" r="1.7" fill="#ffbb78" fill-opacity="0.85"/><circle cx="127.3" cy="302.3" r="1.7" fill="#ff9896" fill-opacity="0.85"/><circle cx="146.5" cy="267.5" r="1.7" fill="#1f77b4" fill-opacity="0.85"/><circle cx="146.3" cy="305.0" r="1.7" fill="#2ca02c" fill-opacity="0.85"/><circle cx="139.6" cy="332.3" r="1.7" fill="#2ca02c" fill-opacity="0.85"/><circle cx="189.1" cy="252.0" r="1.7" fill="#ff7f0e" fill-opacity="0.85"/><circle cx="125.3" cy="304.8" r="1.7" fill="#ff9896" fill-opacity="0.85"/><circle cx="126.0" cy="307.9" r="1.7" fill="#ff7f0e" fill-opacity="0.85"/><circle cx="144.7" cy="319.0" r="1.7" fill="#d62728" fill-opacity="0.85"/><circle cx="123.1" cy="329.5" r="1.7" fill="#98df8a" fill-opacity="0.85"/><circle cx="282.4" cy="188.2" r="1.7" fill="#98df8a" fill-opacity="0.85"/><circle cx="147.2" cy="311.3" r="1.7" fill="#ffbb78" fill-opacity="0.85"/><circle cx="136.8" cy="345.0" r="1.7" fill="#d62728" fill-opacity="0.85"/><circle cx="168.1" cy="301.2" r="1.7" fill="#ff9896" fill-opacity="0.85"/><circle cx="161.6" cy="329.9" r="1.7" fill="#d62728" fill-opacity="0.85"/><circle cx="134.4" cy="297.6" r="1.7" fill="#ff7f0e" fill-opacity="0.85"/><circle cx="123.6" cy="331.6" r="1.7" fill="#98df8a" fill-opacity="0.85"/><circle cx="178.6" cy="267.7" r="1.7" fill="#98df8a" fill-opacity="0.85"/><circle cx="298.8" cy="240.4" r="1.7" fill="#ff9896" fill-opacity="0.85"/><circle cx="149.2" cy="284.5" r="1.7" fill="#1f77b4" fill-opacity="0.85"/><circle cx="171.0" cy="238.1" r="1.7" fill="#aec7e8" fill-opacity="0.85"/><circle cx="150.3" cy="292.6" r="1.7" fill="#ffbb78" fill-opacity="0.85"/><circle cx="201.1" cy="255.4" r="1.7" fill="#98df8a" fill-opacity="0.85"/><circle cx="164.2" cy="262.9" r="1.7" fill="#1f77b4" fill-opacity="0.85"/><circle cx="186.5" cy="265.4" r="1.7" fill="#1f77b4" fill-opacity="0.85"/><circle cx="293.3" cy="228.2" r="1.7" fill="#ff7f0e" fill-opacity="0.85"/><circle cx="143.9" cy="275.3" r="1.7" fill="#1f77b4" fill-opacity="0.85"/><circle cx="178.2" cy="285.2" r="1.7" fill="#98df8a" fill-opacity="0.85"/><circle cx="172.4" cy="273.0" r="1.7" fill="#ffbb78" fill-opacity="0.85"/><circle cx="263.8" cy="207.9" r="1.7" fill="#ff7f0e" fill-opacity="0.85"/><circle cx="200.8" cy="315.9" r="1.7" fill="#ff7f0e" fill-opacity="0.85"/><circle cx="175.3" cy="284.2" r="1.7" fill="#1f77b4" fill-opacity="0.85"/><circle cx="130.8" cy="304.0" r="1.7" fill="#ff7f0e" fill-opacity="0.85"/><circle cx="168.1" cy="289.5" r="1.7" fill="#ff7f0e" fill-opacity="0.85"/><circle cx="219.1" cy="252.8" r="1.7" fill="#d62728" fill-opacity="0.85"/><circle cx="177.6" cy="240.5" r="1.7" fill="#1f77b4" fill-opacity="0.85"/><circle cx="261.9" cy="218.5" r="1.7" fill="#1f77b4" fill-opacity="0.85"/><circle cx="159.3" cy="250.1" r="1.7" fill="#aec7e8" fill-opacity="0.85"/><circle cx="127.4" cy="331.5" r="1.7" fill="#1f77b4" fill-opacity="0.85"/><circle cx="150.8" cy="267.3" r="1.7" fill="#aec7e8" fill-opacity="0.85"/><circle cx="187.1" cy="245.1" r="1.7" fill="#d62728" fill-opacity="0.85"/><circle cx="163.7" cy="274.0" r="1.7" fill="#ff7f0e" fill-opacity="0.85"/><circle cx="200.7" cy="244.1" r="1.7" fill="#ffbb78" fill-opacity="0.85"/><circle cx="205.7" cy="279.4" r="1.7" fill="#1f77b4" fill-opacity="0.85"/><circle cx="211.4" cy="217.2" r="1.7" fill="#ff9896" fill-opacity="0.85"/><circle cx="134.5" cy="309.7" r="1.7" fill="#aec7e8" fill-opacity="0.85"/><circle cx="215.8" cy="235.1" r="1.7" fill="#98df8a" fill-opacity="0.85"/><circle cx="142.2" cy="344.3" r="1.7" fill="#d62728" fill-opacity="0.85"/><circle cx="151.8" cy="322.5" r="1.7" fill="#ff7f0e" fill-opacity="0.85"/><circle cx="115.0" cy="313.2" r="1.7" fill="#aec7e8" fill-opacity="0.85"/><circle cx="144.3" cy="290.9" r="1.7" fill="#98df8a" fill-opacity="0.85"/><circle cx="181.0" cy="255.0" r="1.7" fill="#aec7e8" fill-opacity="0.85"/><circle cx="221.5" cy="238.8" r="1.7" fill="#ffbb78" fill-opacity="0.85"/><circle cx="120.0" cy="328.4" r="1.7" fill="#ff7f0e" fill-opacity="0.85"/><circle cx="189.6" cy="234.9" r="1.7" fill="#ffbb78" fill-opacity="0.85"/><circle cx="205.4" cy="293.7" r="1.7" fill="#2ca02c" fill-opacity="0.85"/><circle cx="143.8" cy="288.0" r="1.7" fill="#ff7f0e" fill-opacity="0.85"/><circle cx="261.8" cy="227.7" r="1.7" fill="#aec7e8" fill-opacity="0.85"/><circle cx="299.0" cy="207.0" r="1.7" fill="#98df8a" fill-opacity="0.85"/><circle cx="257.1" cy="236.8" r="1.7" fill="#aec7e8" fill-opacity="0.85"/><circle cx="126.1" cy="310.9" r="1.7" fill="#1f77b4" fill-opacity="0.85"/><circle cx="260.5" cy="229.4" r="1.7" fill="#ff9896" fill-opacity="0.85"/><circle cx="195.0" cy="227.0" r="1.7" fill="#ffbb78" fill-opacity="0.85"/><circle cx="257.4" cy="197.0" r="1.7" fill="#aec7e8" fill-opacity="0.85"/><circle cx="200.1" cy="264.4" r="1.7" fill="#ff7f0e" fill-opacity="0.85"/><circle cx="214.5" cy="281.0" r="1.7" fill="#ff9896" fill-opacity="0.85"/><circle cx="148.6" cy="317.3" r="1.7" fill="#1f77b4" fill-opacity="0.85"/><circle cx="146.0" cy="324.1" r="1.7" fill="#d62728" fill-opacity="0.85"/><circle cx="212.0" cy="248.9" r="1.7" fill="#1f77b4" fill-opacity="0.85"/><circle cx="306.4" cy="206.6" r="1.7" fill="#ff9896" fill-opacity="0.85"/><circle cx="192.2" cy="263.0" r="1.7" fill="#2ca02c" fill-opacity="0.85"/><circle cx="264.4" cy="242.1" r="1.7" fill="#ff9896" fill-opacity="0.85"/><circle cx="125.4" cy="331.3" r="1.7" fill="#2ca02c" fill-opacity="0.85"/><circle cx="156.5" cy="298.7" r="1.7" fill="#ff9896" fill-opacity="0.85"/><circle cx="151.0" cy="318.3" r="1.7" fill="#ff9896" fill-opacity="0.85"/><circle cx="164.3" cy="271.9" r="1.7" fill="#ffbb78" fill-opacity="0.85"/><circle cx="116.1" cy="349.6" r="1.7" fill="#d62728" fill-opacity="0.85"/><circle cx="171.8" cy="292.7" r="1.7" fill="#d62728" fill-opacity="0.85"/><circle cx="215.5" cy="241.7" r="1.7" fill="#ff7f0e" fill-opacity="0.85"/><circle cx="166.4" cy="305.0" r="1.7" fill="#98df8a" fill-opacity="0.85"/><circle cx="148.7" cy="299.9" r="1.7" fill="#ff7f0e" fill-opacity="0.85"/><circle cx="210.6" cy="231.1" r="1.7" fill="#ffbb78" fill-opacity="0.85"/><circle cx="129.3" cy="342.0" r="1.7" fill="#2ca02c" fill-opacity="0.85"/><circle cx="149.9" cy="274.5" r="1.7" fill="#ffbb78" fill-opacity="0.85"/><circle cx="261.3" cy="205.3" r="1.7" fill="#98df8a" fill-opacity="0.85"/><circle cx="297.5" cy="181.5" r="1.7" fill="#98df8a" fill-opacity="0.85"/><circle cx="201.2" cy="242.2" r="1.7" fill="#aec7e8" fill-opacity="0.85"/><circle cx="165.8" cy="263.0" r="1.7" fill="#1f77b4" fill-opacity="0.85"/><circle cx="128.1" cy="305.5" r="1.7" fill="#1f77b4" fill-opacity="0.85"/><circle cx="155.1" cy="300.1" r="1.7" fill="#d62728" fill-opacity="0.85"/><circle cx="185.7" cy="325.5" r="1.7" fill="#98df8a" fill-opacity="0.85"/><circle cx="147.8" cy="304.8" r="1.7" fill="#ff7f0e" fill-opacity="0.85"/><circle cx="188.0" cy="255.9" r="1.7" fill="#1f77b4" fill-opacity="0.85"/><circle cx="188.6" cy="233.1" r="1.7" fill="#aec7e8" fill-opacity="0.85"/><circle cx="455.9" cy="239.5" r="1.7" fill="#2ca02c" fill-opacity="0.85"/><circle cx="149.9" cy="319.7" r="1.7" fill="#ff7f0e" fill-opacity="0.85"/><circle cx="286.0" cy="182.9" r="1.7" fill="#aec7e8" fill-opacity="0.85"/><circle cx="142.6" cy="272.3" r="1.7" fill="#1f77b4" fill-opacity="0.85"/><circle cx="139.3" cy="324.6" r="1.7" fill="#ffbb78" fill-opacity="0.85"/><circle cx="245.7" cy="237.4" r="1.7" fill="#98df8a" fill-opacity="0.85"/><circle cx="122.5" cy="326.7" r="1.7" fill="#aec7e8" fill-opacity="0.85"/><circle cx="162.3" cy="325.0" r="1.7" fill="#d62728" fill-opacity="0.85"/><circle cx="118.4" cy="340.5" r="1.7" fill="#2ca02c" fill-opacity="0.85"/><circle cx="206.0" cy="240.9" r="1.7" fill="#2ca02c" fill-opacity="0.85"/><circle cx="201.0" cy="240.2" r="1.7" fill="#ffbb78" fill-opacity="0.85"/><circle cx="145.2" cy="284.1" r="1.7" fill="#1f77b4" fill-opacity="0.85"/><circle cx="146.6" cy="275.6" r="1.7" fill="#aec7e8" fill-opacity="0.85"/><circle cx="151.1" cy="308.8" r="1.7" fill="#2ca02c" fill-opacity="0.85"/><circle cx="320.4" cy="251.8" r="1.7" fill="#aec7e8" fill-opacity="0.85"/><circle cx="119.7" cy="319.6" r="1.7" fill="#98df8a" fill-opacity="0.85"/><circle cx="430.9" cy="179.9" r="1.7" fill="#ffbb78" fill-opacity="0.85"/><circle cx="198.2" cy="275.8" r="1.7" fill="#ff7f0e" fill-opacity="0.85"/><circle cx="150.8" cy="306.5" r="1.7" fill="#98df8a" fill-opacity="0.85"/><circle cx="196.7" cy="253.8" r="1.7" fill="#1f77b4" fill-opacity="0.85"/><circle cx="136.5" cy="310.5" r="1.7" fill="#ff7f0e" fill-opacity="0.85"/><circle cx="233.1" cy="252.4" r="1.7" fill="#aec7e8" fill-opacity="0.85"/><circle cx="152.4" cy="296.6" r="1.7" fill="#2ca02c" fill-opacity="0.85"/><circle cx="206.6" cy="219.2" r="1.7" fill="#ffbb78" fill-opacity="0.85"/><circle cx="164.3" cy="285.9" r="1.7" fill="#aec7e8" fill-opacity="0.85"/><circle cx="271.2" cy="227.7" r="1.7" fill="#d62728" fill-opacity="0.85"/><circle cx="164.5" cy="280.4" r="1.7" fill="#98df8a" fill-opacity="0.85"/><circle cx="155.0" cy="298.2" r="1.7" fill="#aec7e8" fill-opacity="0.85"/><circle cx="123.1" cy="317.6" r="1.7" fill="#ff9896" fill-opacity="0.85"/><circle cx="294.5" cy="289.9" r="1.7" fill="#1f77b4" fill-opacity="0.85"/><circle cx="155.1" cy="334.0" r="1.7" fill="#ff9896" fill-opacity="0.85"/><circle cx="196.5" cy="261.7" r="1.7" fill="#2ca02c" fill-opacity="0.85"/><circle cx="172.9" cy="265.1" r="1.7" fill="#ff7f0e" fill-opacity="0.85"/><circle cx="191.0" cy="273.0" r="1.7" fill="#d62728" fill-opacity="0.85"/><circle cx="164.2" cy="273.2" r="1.7" fill="#aec7e8" fill-opacity="0.85"/><circle cx="148.8" cy="286.0" r="1.7" fill="#aec7e8" fill-opacity="0.85"/><circle cx="118.7" cy="317.0" r="1.7" fill="#ff7f0e" fill-opacity="0.85"/><circle cx="208.5" cy="262.1" r="1.7" fill="#d62728" fill-opacity="0.85"/><circle cx="191.8" cy="209.7" r="1.7" fill="#1f77b4" fill-opacity="0.85"/><circle cx="194.8" cy="211.2" r="1.7" fill="#1f77b4" fill-opacity="0.85"/><circle cx="203.3" cy="208.8" r="1.7" fill="#1f77b4" fill-opacity="0.85"/><circle cx="209.3" cy="203.6" r="1.7" fill="#1f77b4" fill-opacity="0.85"/><circle cx="213.0" cy="205.7" r="1.7" fill="#1f77b4" fill-opacity="0.85"/><circle cx="213.0" cy="219.3" r="1.7" fill="#1f77b4" fill-opacity="0.85"/><circle cx="237.2" cy="208.8" r="1.7" fill="#1f77b4" fill-opacity="0.85"/><circle cx="154.9" cy="234.8" r="1.7" fill="#aec7e8" fill-opacity="0.85"/><circle cx="156.1" cy="237.8" r="1.7" fill="#aec7e8" fill-opacity="0.85"/><circle cx="167.6" cy="234.8" r="1.7" fill="#aec7e8" fill-opacity="0.85"/><circle cx="164.0" cy="238.4" r="1.7" fill="#aec7e8" fill-opacity="0.85"/><circle cx="197.8" cy="229.3" r="1.7" fill="#aec7e8" fill-opacity="0.85"/><circle cx="200.0" cy="225.7" r="1.7" fill="#aec7e8" fill-opacity="0.85"/><circle cx="202.4" cy="232.3" r="1.7" fill="#aec7e8" fill-opacity="0.85"/><circle cx="150.7" cy="250.5" r="1.7" fill="#aec7e8" fill-opacity="0.85"/><circle cx="146.4" cy="257.2" r="1.7" fill="#aec7e8" fill-opacity="0.85"/><circle cx="154.9" cy="259.6" r="1.7" fill="#aec7e8" fill-opacity="0.85"/><circle cx="128.9" cy="265.6" r="1.7" fill="#ff7f0e" fill-opacity="0.85"/><circle cx="118.6" cy="274.1" r="1.7" fill="#ffbb78" fill-opacity="0.85"/><circle cx="188.2" cy="228.7" r="1.7" fill="#ffbb78" fill-opacity="0.85"/><circle cx="178.8" cy="233.3" r="1.7" fill="#ffbb78" fill-opacity="0.85"/><circle cx="142.5" cy="254.1" r="1.7" fill="#2ca02c" fill-opacity="0.85"/><circle cx="162.2" cy="245.0" r="1.7" fill="#2ca02c" fill-opacity="0.85"/><circle cx="166.4" cy="250.5" r="1.7" fill="#2ca02c" fill-opacity="0.85"/><circle cx="187.3" cy="238.4" r="1.7" fill="#2ca02c" fill-opacity="0.85"/><circle cx="188.2" cy="245.0" r="1.7" fill="#2ca02c" fill-opacity="0.85"/><circle cx="191.2" cy="243.8" r="1.7" fill="#1f77b4" fill-opacity="0.85"/><circle cx="192.4" cy="327.6" r="1.7" fill="#98df8a" fill-opacity="0.85"/><circle cx="249.3" cy="280.7" r="1.7" fill="#98df8a" fill-opacity="0.85"/><circle cx="179.1" cy="345.8" r="1.7" fill="#ff7f0e" fill-opacity="0.85"/><circle cx="150.4" cy="347.9" r="1.7" fill="#ff7f0e" fill-opacity="0.85"/><circle cx="121.3" cy="354.9" r="1.7" fill="#d62728" fill-opacity="0.85"/><circle cx="126.2" cy="352.4" r="1.7" fill="#d62728" fill-opacity="0.85"/><circle cx="124.3" cy="347.3" r="1.7" fill="#d62728" fill-opacity="0.85"/><circle cx="115.6" cy="347.9" r="1.7" fill="#d62728" fill-opacity="0.85"/><circle cx="113.8" cy="343.7" r="1.7" fill="#d62728" fill-opacity="0.85"/><circle cx="177.0" cy="246.0" r="1.7" fill="#ff9896" fill-opacity="0.85"/><circle cx="160.0" cy="262.0" r="1.7" fill="#ff9896" fill-opacity="0.85"/><circle cx="168.0" cy="246.0" r="1.7" fill="#1f77b4" fill-opacity="0.85"/><circle cx="172.0" cy="250.0" r="1.7" fill="#1f77b4" fill-opacity="0.85"/><circle cx="175.0" cy="240.0" r="1.7" fill="#aec7e8" fill-opacity="0.85"/><circle cx="186.0" cy="237.0" r="1.7" fill="#98df8a" fill-opacity="0.85"/><circle cx="183.0" cy="252.0" r="1.7" fill="#ff9896" fill-opacity="0.85"/><circle cx="160.0" cy="255.0" r="1.7" fill="#ffbb78" fill-opacity="0.85"/><circle cx="196.0" cy="240.0" r="1.7" fill="#ff7f0e" fill-opacity="0.85"/><circle cx="180.0" cy="243.0" r="1.7" fill="#1f77b4" fill-opacity="0.85"/><circle cx="230.0" cy="219.0" r="1.7" fill="#98df8a" fill-opacity="0.85"/><circle cx="243.0" cy="218.0" r="1.7" fill="#98df8a" fill-opacity="0.85"/><circle cx="236.0" cy="227.0" r="1.7" fill="#aec7e8" fill-opacity="0.85"/><circle cx="238.0" cy="222.0" r="1.7" fill="#2ca02c" fill-opacity="0.85"/><circle cx="246.0" cy="226.0" r="1.7" fill="#ff9896" fill-opacity="0.85"/><circle cx="224.0" cy="236.0" r="1.7" fill="#ffbb78" fill-opacity="0.85"/><circle cx="250.0" cy="229.0" r="1.7" fill="#aec7e8" fill-opacity="0.85"/><circle cx="323.9" cy="233.8" r="1.7" fill="#2ca02c" fill-opacity="0.85"/><circle cx="282.4" cy="246.3" r="1.7" fill="#2ca02c" fill-opacity="0.85"/><circle cx="277.0" cy="252.8" r="1.7" fill="#d62728" fill-opacity="0.85"/><circle cx="267.8" cy="259.3" r="1.7" fill="#ff7f0e" fill-opacity="0.85"/><circle cx="303.0" cy="173.8" r="1.7" fill="#ff7f0e" fill-opacity="0.85"/><circle cx="275.5" cy="184.6" r="1.7" fill="#ff7f0e" fill-opacity="0.85"/><circle cx="284.6" cy="188.0" r="1.7" fill="#ff7f0e" fill-opacity="0.85"/><circle cx="293.0" cy="179.4" r="1.7" fill="#aec7e8" fill-opacity="0.85"/><circle cx="264.3" cy="204.5" r="1.7" fill="#1f77b4" fill-opacity="0.85"/><line x1="122.8" y1="303.5" x2="455.9" y2="176.8" stroke="#2ca02c" stroke-width="2.1" stroke-linecap="round"/><line x1="114.1" y1="327.0" x2="313.8" y2="186.4" stroke="#98df8a" stroke-width="2.1" stroke-linecap="round"/><line x1="121.4" y1="299.4" x2="367.0" y2="179.2" stroke="#1f77b4" stroke-width="2.1" stroke-linecap="round"/><line x1="112.5" y1="324.5" x2="399.9" y2="186.1" stroke="#d62728" stroke-width="2.1" stroke-linecap="round"/><line x1="124.4" y1="318.2" x2="348.8" y2="174.1" stroke="#ff9896" stroke-width="2.1" stroke-linecap="round"/><line x1="109.6" y1="303.0" x2="321.0" y2="179.9" stroke="#aec7e8" stroke-width="2.1" stroke-linecap="round"/><line x1="112.5" y1="334.2" x2="342.8" y2="172.8" stroke="#ff7f0e" stroke-width="2.1" stroke-linecap="round"/><line x1="109.1" y1="307.9" x2="430.7" y2="166.1" stroke="#ffbb78" stroke-width="2.1" stroke-linecap="round"/><path d="M91.5 50.7V369.4H472.6" fill="none" stroke="#cdcdcd" stroke-width="1.4"/><text x="83.8" y="354.9" text-anchor="end" class="tk">0.35</text><text x="83.8" y="318.6" text-anchor="end" class="tk">0.40</text><text x="83.8" y="282.2" text-anchor="end" class="tk">0.45</text><text x="83.8" y="245.9" text-anchor="end" class="tk">0.50</text><text x="83.8" y="209.6" text-anchor="end" class="tk">0.55</text><text x="83.8" y="173.3" text-anchor="end" class="tk">0.60</text><text x="83.8" y="136.9" text-anchor="end" class="tk">0.65</text><text x="83.8" y="100.6" text-anchor="end" class="tk">0.70</text><text x="83.8" y="64.3" text-anchor="end" class="tk">0.75</text><text x="104.5" y="383.7" text-anchor="middle" class="tk">0</text><text x="167.5" y="383.7" text-anchor="middle" class="tk">1000</text><text x="230.5" y="383.7" text-anchor="middle" class="tk">2000</text><text x="293.4" y="383.7" text-anchor="middle" class="tk">3000</text><text x="356.4" y="383.7" text-anchor="middle" class="tk">4000</text><text x="419.4" y="383.7" text-anchor="middle" class="tk">5000</text><text x="282" y="396.8" text-anchor="middle" class="al">XT+YT</text><text transform="translate(60.8,211.3) rotate(-90)" text-anchor="middle" class="al">H(3)</text><text x="504" y="177.9" class="al">Animal</text><circle cx="510.5" cy="188.8" r="1.9" fill="#2ca02c" fill-opacity="0.9"/><text x="527.6" y="191.3" class="lg">13</text><circle cx="510.5" cy="202.2" r="1.9" fill="#98df8a" fill-opacity="0.9"/><text x="527.6" y="204.7" class="lg">16</text><circle cx="510.5" cy="215.6" r="1.9" fill="#1f77b4" fill-opacity="0.9"/><text x="527.6" y="218.1" class="lg">2</text><circle cx="510.5" cy="229.0" r="1.9" fill="#d62728" fill-opacity="0.9"/><text x="527.6" y="231.5" class="lg">20</text><circle cx="510.5" cy="242.4" r="1.9" fill="#ff9896" fill-opacity="0.9"/><text x="527.6" y="244.9" class="lg">30</text><circle cx="510.5" cy="255.8" r="1.9" fill="#aec7e8" fill-opacity="0.9"/><text x="527.6" y="258.3" class="lg">4</text><circle cx="510.5" cy="269.2" r="1.9" fill="#ff7f0e" fill-opacity="0.9"/><text x="527.6" y="271.7" class="lg">6</text><circle cx="510.5" cy="282.6" r="1.9" fill="#ffbb78" fill-opacity="0.9"/><text x="527.6" y="285.1" class="lg">7</text></svg>

<!-- ===== html output panel ===== -->
<div class="a" style="left:1.2px;top:419.3px;width:546px;height:156.7px;border:0.8px solid #e6e6e6;background:#f3f3f3"></div>
<div class="a" style="left:3.2px;top:421.8px;width:543.4px;height:153.4px;border:0.9px solid #bdbdbd;background:#fff;overflow:hidden"></div>
<div class="a" style="left:0;top:421.8px;width:546px;height:152.6px;overflow:hidden">
<span class="a" style="left:6.6px;top:423.6px;transform:translateY(-421.8px);font-size:11.3px;font-weight:bold;letter-spacing:-0.32px;line-height:14px;color:#111">Linear Regression</span>
<span class="a" style="left:6.6px;top:448.1px;transform:translateY(-421.8px);font-size:8.6px;font-weight:bold;letter-spacing:0.04px;line-height:11px;color:#111;-webkit-text-stroke:0.2px">Animal: 7</span>
<div style="position:absolute;left:0;top:-421.8px"><div class="rt" style="left:6.5px;top:458.2px;width:389.6px;height:52.6px"><div class="rh" style="height:17.25px"></div><div class="ri" style="width:11.4px;height:51.8px"></div><div class="vl" style="left:0.0px;height:52.6px"></div><div class="vl" style="left:11.4px;height:52.6px"></div><div class="vl" style="left:50.7px;height:52.6px"></div><div class="vl" style="left:89.7px;height:52.6px"></div><div class="vl" style="left:128.9px;height:52.6px"></div><div class="vl" style="left:172.6px;height:52.6px"></div><div class="vl" style="left:227.7px;height:52.6px"></div><div class="vl" style="left:266.6px;height:52.6px"></div><div class="vl" style="left:306.2px;height:52.6px"></div><div class="vl" style="left:345.4px;height:52.6px"></div><div class="vl" style="left:388.7px;height:52.6px"></div><div class="hl" style="top:0.0px"></div><div class="hl" style="top:17.2px"></div><div class="hl" style="top:34.5px"></div><div class="hl" style="top:51.8px"></div><span class="th" style="left:11.9px;width:39.3px;top:2.1px;line-height:17.25px">names</span><span class="th" style="left:51.2px;width:39.0px;top:2.1px;line-height:17.25px">coef</span><span class="th" style="left:90.2px;width:39.2px;top:2.1px;line-height:17.25px">se</span><span class="th" style="left:129.4px;width:43.7px;top:2.1px;line-height:17.25px">T</span><span class="th" style="left:173.1px;width:55.1px;top:2.1px;line-height:17.25px">pval</span><span class="th" style="left:228.2px;width:38.9px;top:2.1px;line-height:17.25px">r2</span><span class="th" style="left:267.1px;width:39.6px;top:2.1px;line-height:17.25px">adj_r2</span><span class="th" style="left:306.7px;width:39.2px;top:2.1px;line-height:17.25px">CI[2.5%]</span><span class="th" style="left:345.9px;width:43.3px;top:2.1px;line-height:17.25px">CI[97.5%]</span><span class="th" style="left:0.5px;width:11.4px;top:19.4px;line-height:17.25px">0</span><span class="td" style="left:14.8px;top:19.6px;line-height:17.25px;letter-spacing:0.3px">Intercept</span><span class="td" style="left:54.1px;top:19.6px;line-height:17.25px">0.406693</span><span class="td" style="left:93.1px;top:19.6px;line-height:17.25px">0.008670</span><span class="td" style="left:132.3px;top:19.6px;line-height:17.25px">46.906534</span><span class="td" style="left:176.0px;top:19.6px;line-height:17.25px;letter-spacing:0.04px">3.268620e-39</span><span class="td" style="left:231.1px;top:19.6px;line-height:17.25px">0.621282</span><span class="td" style="left:270.0px;top:19.6px;line-height:17.25px">0.612675</span><span class="td" style="left:309.6px;top:19.6px;line-height:17.25px">0.389219</span><span class="td" style="left:348.8px;top:19.6px;line-height:17.25px">0.424167</span><span class="th" style="left:0.5px;width:11.4px;top:36.7px;line-height:17.25px">1</span><span class="td" style="left:14.8px;top:36.8px;line-height:17.25px">XT+YT</span><span class="td" style="left:54.1px;top:36.8px;line-height:17.25px">0.000038</span><span class="td" style="left:93.1px;top:36.8px;line-height:17.25px">0.000005</span><span class="td" style="left:132.3px;top:36.8px;line-height:17.25px">8.495962</span><span class="td" style="left:176.0px;top:36.8px;line-height:17.25px;letter-spacing:0.04px">7.915424e-11</span><span class="td" style="left:231.1px;top:36.8px;line-height:17.25px">0.621282</span><span class="td" style="left:270.0px;top:36.8px;line-height:17.25px">0.612675</span><span class="td" style="left:309.6px;top:36.8px;line-height:17.25px">0.000029</span><span class="td" style="left:348.8px;top:36.8px;line-height:17.25px">0.000048</span></div></div>
<span class="a" style="left:6.6px;top:522.1px;transform:translateY(-421.8px);font-size:8.6px;font-weight:bold;letter-spacing:0.04px;line-height:11px;color:#111;-webkit-text-stroke:0.2px">Animal: 20</span>
<div style="position:absolute;left:0;top:-421.8px"><div class="rt" style="left:6.5px;top:533.8px;width:385.0px;height:52.6px"><div class="rh" style="height:17.25px"></div><div class="ri" style="width:11.4px;height:51.8px"></div><div class="vl" style="left:0.0px;height:52.6px"></div><div class="vl" style="left:11.4px;height:52.6px"></div><div class="vl" style="left:50.7px;height:52.6px"></div><div class="vl" style="left:89.7px;height:52.6px"></div><div class="vl" style="left:128.9px;height:52.6px"></div><div class="vl" style="left:172.6px;height:52.6px"></div><div class="vl" style="left:227.7px;height:52.6px"></div><div class="vl" style="left:262.3px;height:52.6px"></div><div class="vl" style="left:301.8px;height:52.6px"></div><div class="vl" style="left:341.3px;height:52.6px"></div><div class="vl" style="left:384.1px;height:52.6px"></div><div class="hl" style="top:0.0px"></div><div class="hl" style="top:17.2px"></div><div class="hl" style="top:34.5px"></div><div class="hl" style="top:51.8px"></div><span class="th" style="left:11.9px;width:39.3px;top:2.1px;line-height:17.25px">names</span><span class="th" style="left:51.2px;width:39.0px;top:2.1px;line-height:17.25px">coef</span><span class="th" style="left:90.2px;width:39.2px;top:2.1px;line-height:17.25px">se</span><span class="th" style="left:129.4px;width:43.7px;top:2.1px;line-height:17.25px">T</span><span class="th" style="left:173.1px;width:55.1px;top:2.1px;line-height:17.25px">pval</span><span class="th" style="left:228.2px;width:34.6px;top:2.1px;line-height:17.25px">r2</span><span class="th" style="left:262.8px;width:39.5px;top:2.1px;line-height:17.25px">adj_r2</span><span class="th" style="left:302.3px;width:39.5px;top:2.1px;line-height:17.25px">CI[2.5%]</span><span class="th" style="left:341.8px;width:42.8px;top:2.1px;line-height:17.25px">CI[97.5%]</span><span class="th" style="left:0.5px;width:11.4px;top:19.4px;line-height:17.25px">0</span><span class="td" style="left:14.8px;top:19.6px;line-height:17.25px;letter-spacing:0.3px">Intercept</span><span class="td" style="left:54.1px;top:19.6px;line-height:17.25px">0.380755</span><span class="td" style="left:93.1px;top:19.6px;line-height:17.25px">0.007606</span><span class="td" style="left:132.3px;top:19.6px;line-height:17.25px">50.061297</span><span class="td" style="left:176.0px;top:19.6px;line-height:17.25px;letter-spacing:0.04px">1.963067e-40</span><span class="td" style="left:231.1px;top:19.6px;line-height:17.25px">0.65402</span><span class="td" style="left:265.7px;top:19.6px;line-height:17.25px">0.646157</span><span class="td" style="left:305.2px;top:19.6px;line-height:17.25px">0.365426</span><span class="td" style="left:344.7px;top:19.6px;line-height:17.25px">0.396083</span><span class="th" style="left:0.5px;width:11.4px;top:36.7px;line-height:17.25px">1</span><span class="td" style="left:14.8px;top:36.8px;line-height:17.25px">XT+YT</span><span class="td" style="left:54.1px;top:36.8px;line-height:17.25px">0.000042</span><span class="td" style="left:93.1px;top:36.8px;line-height:17.25px">0.000004</span><span class="td" style="left:132.3px;top:36.8px;line-height:17.25px">9.120000</span><span class="td" style="left:176.0px;top:36.8px;line-height:17.25px;letter-spacing:0.04px">1.100000e-11</span><span class="td" style="left:231.1px;top:36.8px;line-height:17.25px">0.65402</span><span class="td" style="left:265.7px;top:36.8px;line-height:17.25px">0.646157</span><span class="td" style="left:305.2px;top:36.8px;line-height:17.25px">0.000033</span><span class="td" style="left:344.7px;top:36.8px;line-height:17.25px">0.000051</span></div></div>
</div>
<!-- scrollbar -->
<div class="a" style="left:537.2px;top:422.6px;width:8.7px;height:151px;background:#e4e4e4;border-left:0.7px solid #cfcfcf"></div>
<div class="a" style="left:537.5px;top:422.6px;width:8.4px;height:8.8px;background:#f3f3f3"></div>
<div class="a" style="left:537.5px;top:566px;width:8.4px;height:7.6px;background:#f3f3f3"></div>
<div class="a" style="left:537.9px;top:431.4px;width:7.8px;height:32.8px;background:#fff;border:0.6px solid #d0d0d0"></div>
<div class="a" style="left:539.4px;top:425.6px;width:0;height:0;border-left:2.4px solid transparent;border-right:2.4px solid transparent;border-bottom:2.8px solid #333"></div>
<div class="a" style="left:539.4px;top:568.6px;width:0;height:0;border-left:2.4px solid transparent;border-right:2.4px solid transparent;border-top:2.8px solid #333"></div>

<!-- ===== right panel ===== -->
<div class="a" style="left:549.5px;top:0;width:241.5px;height:12.2px;background:#fff"></div>
<div class="a" style="left:549.5px;top:0;width:50.2px;height:12.4px;background:#f0f0f0"></div>
<div class="a" style="left:549.5px;top:12px;width:241.5px;height:19.7px;background:#f0f0f0"></div>
<svg class="ic" style="left:554.6px;top:2.4px" width="8.4" height="7.6" viewBox="0 0 9 8"><path d="M7.8 1.6Q6.2 0.4 4 0.8Q1.2 1.6 1.2 4.2Q1.4 6.6 4 6.8Q5.8 6.8 6.8 5.8" fill="none" stroke="#222" stroke-width="0.9"/><path d="M3.2 4.6L7.6 2L8.4 2.8L4.4 5.2Z" fill="none" stroke="#222" stroke-width="0.7"/><path d="M1 7.4H7.6" stroke="#222" stroke-width="0.8"/></svg>
<span class="t" style="left:567.7px;top:1px;letter-spacing:-0.2px">Animals</span>
<span class="t g" style="left:606.6px;top:0.3px;font-size:9.6px;color:#7d7d7d;-webkit-text-stroke:0">&#955;</span>
<span class="t g" style="left:618.3px;top:1px">Variables</span>
<span class="t" style="left:555.9px;top:17.1px;letter-spacing:-0.2px">Check All</span>
<span class="t" style="left:596.3px;top:17.1px;letter-spacing:-0.14px">Uncheck All</span>
<div class="a" style="left:642.2px;top:15px;width:0.7px;height:13px;background:#e0e0e0"></div>
<svg class="ic" style="left:646.8px;top:17.2px" width="9" height="9" viewBox="0 0 9 9"><circle cx="4.5" cy="4.5" r="3.7" fill="none" stroke="#222" stroke-width="0.8"/><path d="M4.5 2.6V6.4M2.6 4.5H6.4" stroke="#222" stroke-width="0.8"/></svg>
<span class="t" style="left:657.8px;top:17.1px;letter-spacing:-0.1px">Add property</span>
<!-- table -->
<div class="a" style="left:550.1px;top:31.6px;width:240.9px;height:192px;background:#fff"></div>
<div class="a" style="left:550.1px;top:31.6px;width:240.9px;height:11.8px;background:#ebebeb"></div>
<div class="a" style="left:550.1px;top:31.6px;width:220.8px;height:11.8px;background:#fafafa;border-top:0.7px solid #dedede;border-bottom:0.8px solid #d4d4d4"></div>
<div class="a" style="left:549.4px;top:31.4px;width:0.9px;height:192px;background:#a4a4a4"></div>
<span class="t" style="left:554.6px;top:33.2px">Animal</span>
<div class="a" style="left:582.7px;top:35.8px;width:0;height:0;border-left:2.5px solid transparent;border-right:2.5px solid transparent;border-bottom:2.6px solid #333"></div>
<span class="t" style="left:599.6px;top:33.2px;letter-spacing:-0.5px">Box</span>
<span class="t" style="left:628.8px;top:33.2px">Weight</span>
<span class="t" style="left:672px;top:33.2px;letter-spacing:-0.5px">Text1</span>
<span class="t" style="left:708.2px;top:33.2px;letter-spacing:-0.5px">Text2</span>
<span class="t" style="left:744.4px;top:33.2px;letter-spacing:-0.5px">Text3</span>
<div class="ar" style="top:43.30px"><span class="cb on"><svg class="ckm" viewBox="0 0 8 8"><path d="M1.6 4.1L3.3 6L6.4 1.6" fill="none" stroke="#111" stroke-width="1.5"/></svg></span><span class="sw" style="background:#2ca02c"></span><span class="c" style="left:28px">13</span><span class="c" style="left:42.2px">5</span><span class="c" style="left:71.6px">24</span><span class="c" style="left:113.6px">t=0</span><span class="c" style="left:149.9px">act</span></div><div class="ar" style="top:55.79px"><span class="cb on"><svg class="ckm" viewBox="0 0 8 8"><path d="M1.6 4.1L3.3 6L6.4 1.6" fill="none" stroke="#111" stroke-width="1.5"/></svg></span><span class="sw" style="background:#98df8a"></span><span class="c" style="left:28px">16</span><span class="c" style="left:42.2px">6</span><span class="c" style="left:71.6px">23.8</span><span class="c" style="left:113.6px">t=0</span><span class="c" style="left:149.9px">act</span></div><div class="ar" style="top:68.28px"><span class="cb on"><svg class="ckm" viewBox="0 0 8 8"><path d="M1.6 4.1L3.3 6L6.4 1.6" fill="none" stroke="#111" stroke-width="1.5"/></svg></span><span class="sw" style="background:#1f77b4"></span><span class="c" style="left:28px">2</span><span class="c" style="left:42.2px">1</span><span class="c" style="left:71.6px">24.6</span><span class="c" style="left:113.6px">t=0</span><span class="c" style="left:149.9px">act</span></div><div class="ar" style="top:80.77px"><span class="cb on"><svg class="ckm" viewBox="0 0 8 8"><path d="M1.6 4.1L3.3 6L6.4 1.6" fill="none" stroke="#111" stroke-width="1.5"/></svg></span><span class="sw" style="background:#d62728"></span><span class="c" style="left:28px">20</span><span class="c" style="left:42.2px">7</span><span class="c" style="left:71.6px">23.1</span><span class="c" style="left:113.6px">t=0</span><span class="c" style="left:149.9px">act</span></div><div class="ar" style="top:93.26px"><span class="cb on"><svg class="ckm" viewBox="0 0 8 8"><path d="M1.6 4.1L3.3 6L6.4 1.6" fill="none" stroke="#111" stroke-width="1.5"/></svg></span><span class="sw" style="background:#ff9896"></span><span class="c" style="left:28px">30</span><span class="c" style="left:42.2px">8</span><span class="c" style="left:71.6px">22.6</span><span class="c" style="left:113.6px">t=0</span><span class="c" style="left:149.9px">act</span></div><div class="ar" style="top:105.75px"><span class="cb"></span><span class="sw" style="background:#9467bd"></span><span class="c" style="left:28px">32</span><span class="c" style="left:42.2px">9</span><span class="c" style="left:71.6px">23.8</span><span class="c" style="left:113.6px">t=0</span><span class="c" style="left:149.9px"></span></div><div class="ar" style="top:118.24px"><span class="cb"></span><span class="sw" style="background:#c5b0d5"></span><span class="c" style="left:28px">35</span><span class="c" style="left:42.2px">10</span><span class="c" style="left:71.6px">24.8</span><span class="c" style="left:113.6px">t=0</span><span class="c" style="left:149.9px"></span></div><div class="ar" style="top:130.73px"><span class="cb"></span><span class="sw" style="background:#8c564b"></span><span class="c" style="left:28px">38</span><span class="c" style="left:42.2px">11</span><span class="c" style="left:71.6px">24.2</span><span class="c" style="left:113.6px">t=0</span><span class="c" style="left:149.9px"></span></div><div class="ar" style="top:143.22px"><span class="cb"></span><span class="sw" style="background:#c49c94"></span><span class="c" style="left:28px">39</span><span class="c" style="left:42.2px">12</span><span class="c" style="left:71.6px">24</span><span class="c" style="left:113.6px">t=0</span><span class="c" style="left:149.9px"></span></div><div class="ar" style="top:155.71px"><span class="cb on"><svg class="ckm" viewBox="0 0 8 8"><path d="M1.6 4.1L3.3 6L6.4 1.6" fill="none" stroke="#111" stroke-width="1.5"/></svg></span><span class="sw" style="background:#aec7e8"></span><span class="c" style="left:28px">4</span><span class="c" style="left:42.2px">2</span><span class="c" style="left:71.6px">23.9</span><span class="c" style="left:113.6px">t=0</span><span class="c" style="left:149.9px">act</span></div><div class="ar" style="top:168.20px"><span class="cb on"><svg class="ckm" viewBox="0 0 8 8"><path d="M1.6 4.1L3.3 6L6.4 1.6" fill="none" stroke="#111" stroke-width="1.5"/></svg></span><span class="sw" style="background:#ff7f0e"></span><span class="c" style="left:28px">6</span><span class="c" style="left:42.2px">3</span><span class="c" style="left:71.6px">22.9</span><span class="c" style="left:113.6px">t=0</span><span class="c" style="left:149.9px">act</span></div><div class="ar" style="top:180.69px"><span class="cb on"><svg class="ckm" viewBox="0 0 8 8"><path d="M1.6 4.1L3.3 6L6.4 1.6" fill="none" stroke="#111" stroke-width="1.5"/></svg></span><span class="sw" style="background:#ffbb78"></span><span class="c" style="left:28px">7</span><span class="c" style="left:42.2px">4</span><span class="c" style="left:71.6px">23.4</span><span class="c" style="left:113.6px">t=0</span><span class="c" style="left:149.9px">act</span></div>
<div class="avl" style="left:590px"></div><div class="avl" style="left:620.3px"></div><div class="avl" style="left:661.3px"></div>
<div class="avl" style="left:698px"></div><div class="avl" style="left:734.3px"></div><div class="avl" style="left:770.5px"></div>

<!-- binning panel -->
<div class="a" style="left:550px;top:239.5px;width:241px;height:335.6px;background:#efefef"></div>
<div class="a" style="left:597.2px;top:225px;width:49.2px;height:15px;background:#efefef"></div>
<svg class="ic" style="left:553.6px;top:228.4px" width="10.4" height="10" viewBox="0 0 10.4 10"><path d="M0.8 6.2L5.4 1.6L8.8 1.4L9 4.8L4.4 9.4Z" fill="none" stroke="#666" stroke-width="0.8" stroke-linejoin="round"/><circle cx="7.2" cy="3.2" r="0.7" fill="none" stroke="#666" stroke-width="0.5"/><path d="M7.4 2.6Q7.2 0.6 8.6 0.5Q9.8 0.6 9.6 2" fill="none" stroke="#666" stroke-width="0.6"/></svg>
<span class="t g" style="left:567.7px;top:228.7px;letter-spacing:-0.4px">Factors</span>
<svg class="ic" style="left:602px;top:229.2px" width="9.4" height="8.4" viewBox="0 0 9.4 8.4"><path d="M0.8 0.6V4.2H8.6V0.6M4.7 0.2V7.6M3 6H6.4" fill="none" stroke="#1c1c1c" stroke-width="0.9"/><path d="M4.7 8.4L3.5 6.8H5.9Z" fill="#1c1c1c"/><path d="M4.7 0L3.9 1.2H5.5Z" fill="#1c1c1c"/></svg>
<span class="t" style="left:615.9px;top:228.7px;letter-spacing:-0.16px">Binning</span>

<span class="t" style="left:560.3px;top:250.8px;letter-spacing:-0.12px">Apply Binning</span>
<div class="a" style="left:610.7px;top:251.1px;width:8.4px;height:8.4px;background:#fff;border:0.7px solid #bdbdbd"></div>
<svg class="ic" style="left:610.9px;top:251.3px" width="8" height="8" viewBox="0 0 8 8"><path d="M1.6 4.1L3.3 6L6.4 1.6" fill="none" stroke="#111" stroke-width="1.25"/></svg>
<span class="t" style="left:560.3px;top:267.0px;letter-spacing:-0.1px">Binning Mode</span>
<div class="a" style="left:610.4px;top:264.8px;width:190px;height:14.6px;background:linear-gradient(#f3f3f3,#ebebeb);border:0.8px solid #c9c9c9;border-radius:1.6px"></div>
<span class="t" style="left:614.1px;top:266.8px;letter-spacing:-0.22px">Time Intervals</span>
<span class="t" style="left:554.9px;top:289.4px;letter-spacing:-0.22px">Time Intervals</span>
<div class="a" style="left:555.3px;top:300.6px;width:240px;height:268px;background:#ededed;border:0.8px solid #dadada"></div>
<span class="t" style="left:562px;top:310.6px">Unit</span>
<div class="a" style="left:582.4px;top:308.4px;width:215px;height:14.4px;background:linear-gradient(#f3f3f3,#ebebeb);border:0.8px solid #c9c9c9;border-radius:1.6px"></div>
<span class="t" style="left:585.6px;top:310.6px">hour</span>
<span class="t" style="left:562px;top:328.6px">Delta</span>
<div class="a" style="left:582.4px;top:328px;width:215px;height:11.4px;background:#fff;border:0.8px solid #c4c4c4;border-radius:1px"></div>
<span class="t" style="left:585.8px;top:328.6px">1</span>
<!-- red highlight -->
<div class="a" style="left:550px;top:223px;width:239.4px;height:125.2px;border:2.3px solid #ff0000"></div>
<!-- splitter dots -->
<div class="a" style="left:547.4px;top:283px;width:0.9px;height:11px;background:repeating-linear-gradient(#e2e2e2 0 0.9px,transparent 0.9px 2px)"></div>
<div class="a" style="left:270px;top:420.1px;width:11px;height:0.9px;background:repeating-linear-gradient(90deg,#dadada 0 0.9px,transparent 0.9px 2px)"></div>
</body></html>
